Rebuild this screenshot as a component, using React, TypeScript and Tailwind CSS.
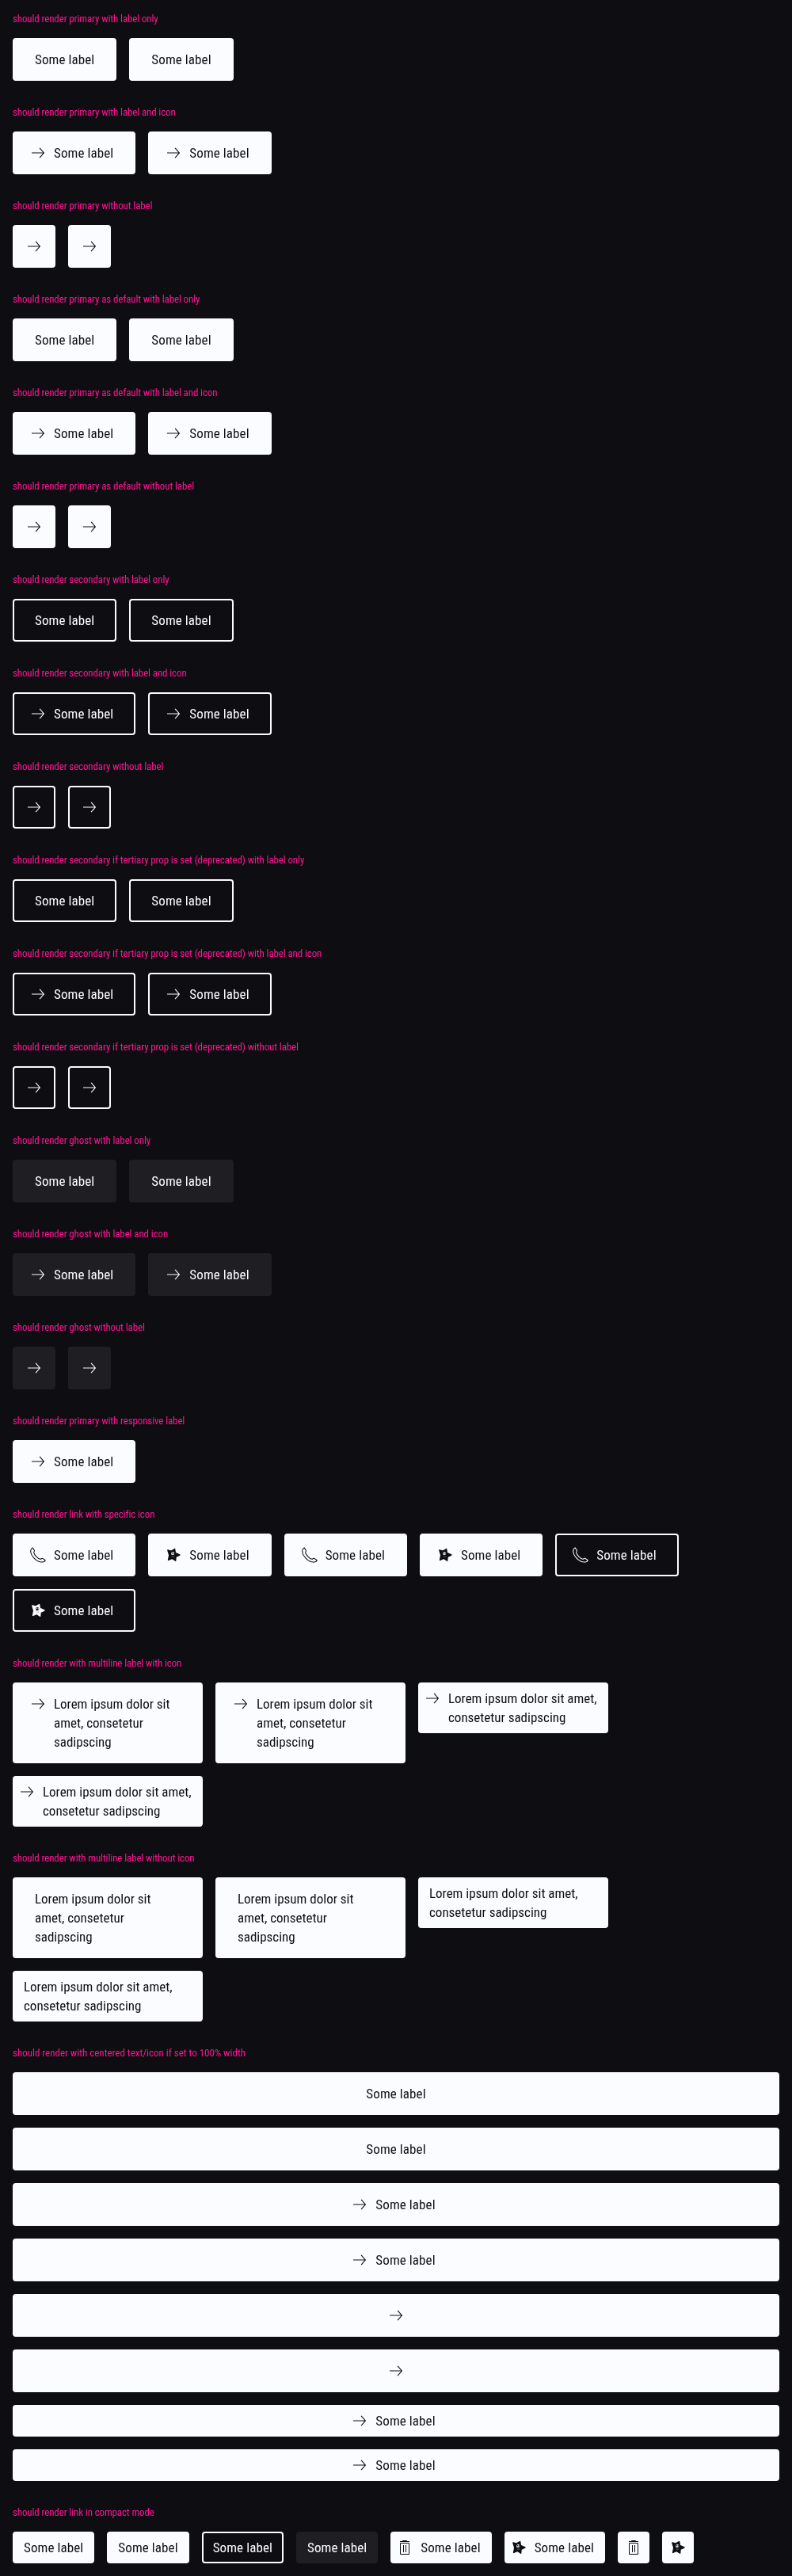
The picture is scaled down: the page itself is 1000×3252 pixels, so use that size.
import type { ReactNode } from 'react';

type Variant = 'primary' | 'secondary' | 'ghost';
type IconName = 'arrow' | 'phone' | 'star' | 'trash';

const variants: Record<Variant, string> = {
  primary: 'border-[#fbfcff] bg-[#fbfcff] text-[#0e0e12]',
  secondary: 'border-[#fbfcff] bg-transparent text-[#fbfcff]',
  ghost: 'border-[#1f1e23] bg-[#1f1e23] text-[#fbfcff]',
};

function Icon({ name }: { name: IconName }) {
  if (name === 'star') {
    return (
      <svg viewBox="0 0 24 24" className="size-6 shrink-0" fill="currentColor">
        <path
          d="M4.9 6 9.2 7.2 13.6 4.6 14.3 9.4 19.9 12 15 14.2 14.6 19.2 10.4 16.4 5.6 18.4 6.8 12.4Z"
          stroke="currentColor"
          strokeWidth="1.5"
          strokeLinejoin="round"
        />
        <path
          className="text-white mix-blend-difference"
          d="M9.2 9.2Q9.9 7.8 11.8 8 13.5 8.5 13.3 10.3 13.1 12 11.6 12.3 10 12.4 9 11.2Z"
          opacity="0.85"
        />
        <circle cx="10.6" cy="9.6" r="0.6" />
        <circle cx="12.4" cy="9.9" r="0.6" />
        <path d="M9.6 13.8q1.5 1.2 3.6.1" stroke="#8a8a8c" strokeWidth="0.6" fill="none" />
      </svg>
    );
  }
  return (
    <svg viewBox="0 0 24 24" className="size-6 shrink-0" fill="none" stroke="currentColor">
      {name === 'arrow' && <path d="M4 12h15.2M14.1 5.8l5.3 6.2-5.3 6.2" strokeWidth="1.1" />}
      {name === 'phone' && (
        <path
          d="M2.8 6.2C3 4.6 3.9 3.4 5.1 2.9L7.4 6.2C7.9 7.4 6.4 7.9 6.7 9.2 7.2 11.8 12 16.8 14.7 17.3 16.1 17.5 16.6 15.9 17.9 16.4L21.3 18.8C20.8 20 19.6 20.8 18.2 21 14.8 21.4 10.2 19.6 6.6 15.6 3.6 12.2 2.4 8.8 2.8 6.2Z"
          strokeWidth="1.05"
          strokeLinejoin="round"
        />
      )}
      {name === 'trash' && <path d="M6 4.5h12M9.5 4.3V3.5h5v.8M6.5 6.5h11v14h-11ZM10.5 9v9M13.5 9v9" />}
    </svg>
  );
}

interface ButtonProps {
  variant?: Variant;
  icon?: IconName;
  compact?: boolean;
  className?: string;
  label?: ReactNode;
}

function LinkButton({ variant = 'primary', icon, compact = false, className = '', label = 'Some label' }: ButtonProps) {
  let padding: string;
  if (!label) padding = compact ? 'px-1 py-1.5' : 'p-[13px]';
  else if (compact) padding = icon ? 'py-1.5 pl-1 pr-3' : 'py-1.5 px-3';
  else padding = icon ? 'py-[13px] pl-[18px] pr-[26px]' : 'py-[13px] px-[26px]';
  return (
    <a
      className={`flex items-start justify-center gap-2 rounded border-2 text-[17px] leading-6 tracking-[0px] ${variants[variant]} ${padding} ${
        label ? '' : compact ? 'min-w-10' : 'min-w-[54px]'
      } ${className}`}
    >
      {icon && <Icon name={icon} />}
      {label === 'Some label' ? (
        <span className="w-[75.33px] whitespace-nowrap tracking-[0.1px]">{label}</span>
      ) : (
        label && <span className="flex-1">{label}</span>
      )}
    </a>
  );
}

function Section({ title, wide = false, children }: { title: string; wide?: boolean; children: ReactNode }) {
  return (
    <section className="p-4">
      <h2 className={`mb-4 text-[13px] leading-4 text-[#ff1493] ${wide ? 'tracking-[-0.02px]' : 'tracking-[-0.13px]'}`}>
        {title}
      </h2>
      <div className="flex flex-wrap items-start gap-4">{children}</div>
    </section>
  );
}

const groups: { title: string; variant: Variant }[] = [
  { title: 'should render primary', variant: 'primary' },
  { title: 'should render primary as default', variant: 'primary' },
  { title: 'should render secondary', variant: 'secondary' },
  { title: 'should render secondary if tertiary prop is set (deprecated)', variant: 'secondary' },
  { title: 'should render ghost', variant: 'ghost' },
];

const longLabel = (
  <>
    Lorem ipsum dolor sit
    <br />
    amet, consetetur
    <br />
    sadipscing
  </>
);

const longLabelCompact = (
  <>
    Lorem ipsum dolor sit amet,
    <br />
    consetetur sadipscing
  </>
);

function Multiline({ icon }: { icon?: IconName }) {
  return (
    <>
      {[false, false, true, true].map((compact, i) => (
        <LinkButton
          key={i}
          icon={icon}
          compact={compact}
          className="w-60 whitespace-nowrap"
          label={compact ? longLabelCompact : longLabel}
        />
      ))}
    </>
  );
}

export default function App() {
  return (
    <main className="min-h-[3252px] w-[1000px] bg-[#0e0e12] font-['Roboto_Condensed',Roboto,sans-serif]">
      {groups.map(({ title, variant }) => (
        <div key={title}>
          <Section title={`${title} with label only`}>
            <LinkButton variant={variant} />
            <LinkButton variant={variant} />
          </Section>
          <Section title={`${title} with label and icon`}>
            <LinkButton variant={variant} icon="arrow" />
            <LinkButton variant={variant} icon="arrow" />
          </Section>
          <Section title={`${title} without label`}>
            <LinkButton variant={variant} icon="arrow" label={null} />
            <LinkButton variant={variant} icon="arrow" label={null} />
          </Section>
        </div>
      ))}
      <Section title="should render primary with responsive label">
        <LinkButton icon="arrow" />
      </Section>
      <Section title="should render link with specific icon">
        <LinkButton icon="phone" />
        <LinkButton icon="star" />
        <LinkButton icon="phone" />
        <LinkButton icon="star" />
        <LinkButton variant="secondary" icon="phone" />
        <div className="w-full">
          <LinkButton variant="secondary" icon="star" className="w-fit" />
        </div>
      </Section>
      <Section title="should render with multiline label with icon">
        <Multiline icon="arrow" />
      </Section>
      <Section title="should render with multiline label without icon">
        <Multiline />
      </Section>
      <Section title="should render with centered text/icon if set to 100% width" wide>
        <LinkButton className="w-full" />
        <LinkButton className="w-full" />
        <LinkButton className="w-full" icon="arrow" />
        <LinkButton className="w-full" icon="arrow" />
        <LinkButton className="w-full" icon="arrow" label={null} />
        <LinkButton className="w-full" icon="arrow" label={null} />
        <LinkButton className="w-full" icon="arrow" compact />
        <LinkButton className="w-full" icon="arrow" compact />
      </Section>
      <Section title="should render link in compact mode">
        <LinkButton compact />
        <LinkButton compact />
        <LinkButton compact variant="secondary" />
        <LinkButton compact variant="ghost" />
        <LinkButton compact icon="trash" />
        <LinkButton compact icon="star" />
        <LinkButton compact icon="trash" label={null} />
        <LinkButton compact icon="star" label={null} />
      </Section>
    </main>
  );
}
